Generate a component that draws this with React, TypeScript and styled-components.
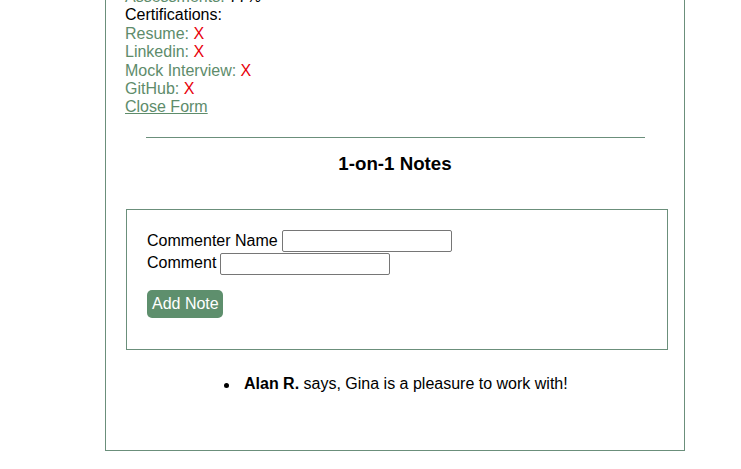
import React from 'react';
import styled, {createGlobalStyle} from 'styled-components';

const GlobalStyle = createGlobalStyle`
  body {
    margin: 0;
    background: #ffffff;
    font-family: "Liberation Sans", Arial, sans-serif;
    font-size: 16px;
    color: #000;
  }
`;

const green = '#5e8c6b';
const border = '#6b8f7b';

const Page = styled.div`
  height: 469px;
  overflow: hidden;
`;

const Card = styled.div`
  box-sizing: border-box;
  width: 580px;
  margin: -33px 0 0 105px;
  padding: 20px 19px 56px 19px;
  border: 1px solid ${border};
  line-height: 18.4px;
`;

const Line = styled.div`
  color: #000;
`;

const Label = styled.span`
  color: ${green};
`;

const Missing = styled.span`
  color: #e8000b;
`;

const CloseLink = styled.a`
  color: ${green};
  text-decoration: underline;
  cursor: pointer;
`;

const Rule = styled.hr`
  margin: 20px 20px 0 21px;
  border: none;
  border-top: 1px solid ${border};
  height: 0;
`;

const Title = styled.h3`
  margin: 15px 0 0;
  text-align: center;
  font-size: 18.72px;
  font-weight: bold;
  line-height: 22px;
`;

const FormBox = styled.form`
  margin: 34px -3px 0 1px;
  border: 1px solid ${border};
  padding: 20px 20px 31px 20px;
`;

const FieldRow = styled.div`
  display: flex;
  align-items: center;
  gap: 4px;
  height: 22.5px;
`;

const Input = styled.input`
  box-sizing: border-box;
  width: 170px;
  height: 22px;
  border: 1px solid #767676;
  border-radius: 2px;
  padding: 1px 2px;
  font-size: 13px;
`;

const Button = styled.button`
  margin-top: 15px;
  height: 28px;
  padding: 0 4px 0 5px;
  border: none;
  border-radius: 5px;
  background: #5e8f6d;
  color: #fff;
  font-family: "Liberation Sans", Arial, sans-serif;
  font-size: 16px;
`;

const Notes = styled.ul`
  margin: 24px 0 0;
  padding-left: 119px;
  list-style: none;
`;

const Note = styled.li`
  position: relative;
  line-height: 20px;

  &::before {
    content: '';
    position: absolute;
    left: -20px;
    top: 9px;
    width: 5px;
    height: 5px;
    border-radius: 50%;
    background: #000;
  }
`;

const certs = ['Resume', 'Linkedin', 'Mock Interview', 'GitHub'];

export default function App() {
  return (
    <Page>
      <GlobalStyle />
      <Card>
        <Line>
          <Label>Assessments:</Label> 77%
        </Line>
        <Line>Certifications:</Line>
        {certs.map(c => (
          <Line key={c}>
            <Label>{c}:</Label> <Missing>X</Missing>
          </Line>
        ))}
        <Line>
          <CloseLink>Close Form</CloseLink>
        </Line>
        <Rule />
        <Title>1-on-1 Notes</Title>
        <FormBox onSubmit={e => e.preventDefault()}>
          <FieldRow>
            Commenter Name <Input type="text" />
          </FieldRow>
          <FieldRow>
            Comment <Input type="text" />
          </FieldRow>
          <Button type="submit">Add Note</Button>
        </FormBox>
        <Notes>
          <Note>
            <b>Alan R.</b> says, Gina is a pleasure to work with!
          </Note>
        </Notes>
      </Card>
    </Page>
  );
}
